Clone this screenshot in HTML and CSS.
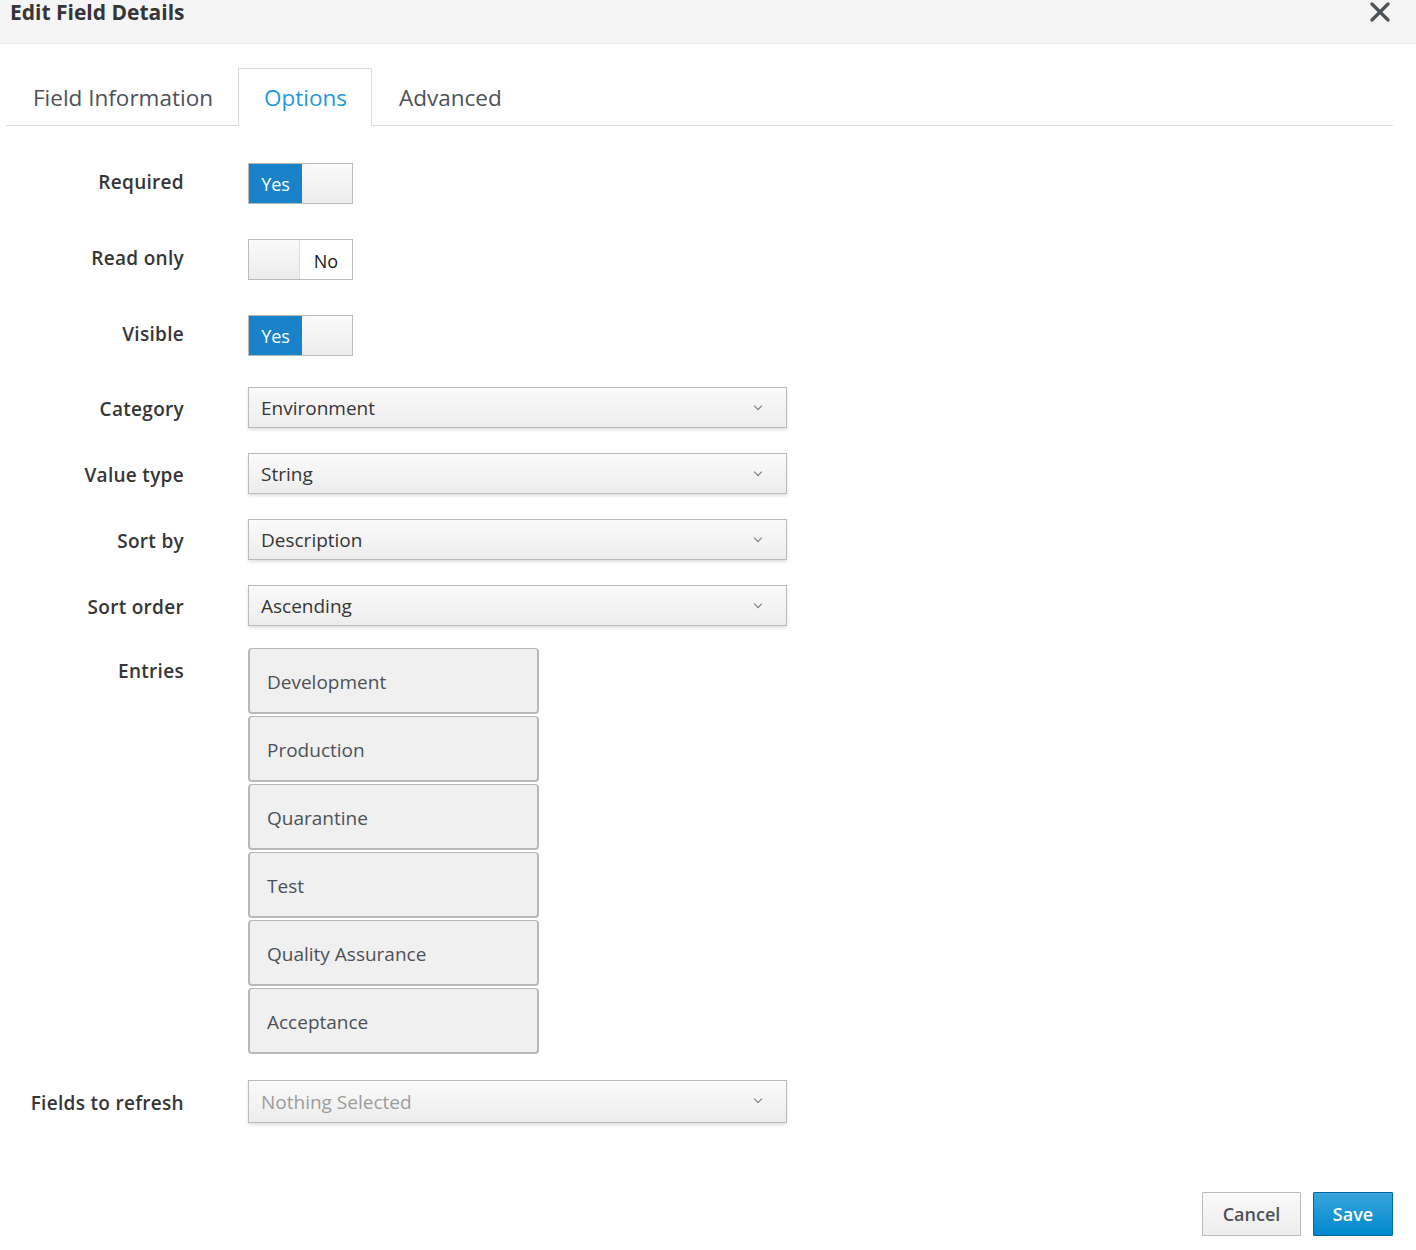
FILE: index.html
```html
<!DOCTYPE html>
<html lang="en">
<head>
    <meta charset="UTF-8">
    <meta name="viewport" content="width=device-width, initial-scale=1.0">
    <title>Edit Field Details</title>
    <link rel="stylesheet" href="styles.css">
</head>
<body>
    <div class="modal-header">
        <h4 class="modal-title">Edit Field Details</h4>
        <button class="close" aria-label="Close">
            <svg width="20" height="20" viewBox="0 0 20 20">
                <path d="M2 2 L18 18 M18 2 L2 18" stroke="#4d5258" stroke-width="3.2" stroke-linecap="round"/>
            </svg>
        </button>
    </div>

    <div class="modal-body">
        <ul class="nav-tabs">
            <li class="tab">Field Information</li>
            <li class="tab active">Options</li>
            <li class="tab">Advanced</li>
        </ul>

        <div class="form">
            <div class="form-group toggle-row">
                <label>Required</label>
                <div class="switch">
                    <span class="switch-on">Yes</span>
                    <span class="switch-handle"></span>
                </div>
            </div>
            <div class="form-group toggle-row">
                <label>Read only</label>
                <div class="switch">
                    <span class="switch-handle"></span>
                    <span class="switch-off">No</span>
                </div>
            </div>
            <div class="form-group toggle-row last-toggle">
                <label>Visible</label>
                <div class="switch">
                    <span class="switch-on">Yes</span>
                    <span class="switch-handle"></span>
                </div>
            </div>

            <div class="form-group select-row">
                <label>Category</label>
                <div class="select">Environment<span class="caret"></span></div>
            </div>
            <div class="form-group select-row">
                <label>Value type</label>
                <div class="select">String<span class="caret"></span></div>
            </div>
            <div class="form-group select-row">
                <label>Sort by</label>
                <div class="select">Description<span class="caret"></span></div>
            </div>
            <div class="form-group select-row entries-before">
                <label>Sort order</label>
                <div class="select">Ascending<span class="caret"></span></div>
            </div>

            <div class="form-group entries-row">
                <label>Entries</label>
                <div class="entries">
                    <div class="entry">Development</div>
                    <div class="entry">Production</div>
                    <div class="entry">Quarantine</div>
                    <div class="entry">Test</div>
                    <div class="entry">Quality Assurance</div>
                    <div class="entry">Acceptance</div>
                </div>
            </div>

            <div class="form-group select-row refresh-row">
                <label>Fields to refresh</label>
                <div class="select placeholder">Nothing Selected<span class="caret"></span></div>
            </div>
        </div>

        <div class="modal-footer">
            <button class="btn btn-default">Cancel</button>
            <button class="btn btn-primary">Save</button>
        </div>
    </div>
</body>
</html>
```

FILE: styles.css
```css
body {
    margin: 0;
    font-family: "Open Sans", "Liberation Sans", sans-serif;
    color: #363636;
    background: #fff;
}
.modal-header {
    display: flex;
    justify-content: space-between;
    align-items: flex-start;
    height: 44px;
    box-sizing: border-box;
    padding: 0 26px 0 10px;
    background-color: #f5f5f5;
    border-bottom: 1px solid #ededed;
}
.modal-title {
    margin: 0;
    margin-top: -2px;
    font-size: 21px;
    line-height: 28px;
    font-weight: 700;
    color: #363636;
}
.close {
    border: none;
    background: none;
    padding: 0;
    margin-top: 2px;
    cursor: pointer;
}
.modal-body {
    padding: 24px 23px 0 6px;
}
.nav-tabs {
    display: flex;
    list-style: none;
    margin: 0;
    padding: 0;
    border-bottom: 1px solid #dcdcdc;
}
.tab {
    height: 56px;
    line-height: 58px;
    padding: 0 24px 0 26px;
    font-size: 22.5px;
    color: #4d5258;
    border: 1px solid transparent;
    border-bottom: none;
    margin-bottom: -1px;
}
.tab.active {
    padding: 0 24px 0 25px;
    color: #1f9ad6;
    background: #fff;
    border-color: #dcdcdc;
    height: 57px;
}
.form {
    padding-top: 37px;
}
.form-group {
    display: grid;
    grid-template-columns: 178px 539px;
    column-gap: 64px;
    align-items: center;
}
.form-group label {
    text-align: right;
    font-size: 19px;
    font-weight: 600;
    letter-spacing: 0.3px;
    color: #363636;
}
.toggle-row label {
    padding-bottom: 3px;
}
.select-row label {
    padding-top: 2px;
}
.toggle-row {
    margin-bottom: 35px;
}
.last-toggle {
    margin-bottom: 31px;
}
.select-row {
    margin-bottom: 25px;
}
.entries-before {
    margin-bottom: 22px;
}
.entries-row {
    align-items: start;
    margin-bottom: 26px;
}
.entries-row label {
    padding-top: 10px;
}

/* on/off switch */
.switch {
    display: flex;
    width: 105px;
    height: 41px;
    box-sizing: border-box;
    border: 1px solid #bbb;
    background: #f5f5f5;
}
.switch-on {
    width: 53px;
    background: #1a82c8;
    color: #fff;
    font-size: 18px;
    line-height: 40px;
    text-align: center;
}
.switch-handle {
    flex: 1;
    background: linear-gradient(#fafafa, #ececec);
}
.switch-off {
    width: 52px;
    background: #fff;
    color: #222;
    font-size: 18px;
    line-height: 42px;
    text-align: center;
    border-left: 1px solid #ddd;
}

/* select box */
.select {
    position: relative;
    height: 41px;
    box-sizing: border-box;
    padding: 0 12px;
    line-height: 41px;
    font-size: 19px;
    color: #363636;
    border: 1px solid #bbb;
    background: linear-gradient(#fafafa, #ededed);
    box-shadow: 0 2px 3px rgba(3, 3, 3, 0.12);
}
.select.placeholder {
    height: 43px;
    line-height: 43px;
    color: #9c9c9c;
}
.caret {
    position: absolute;
    right: 25px;
    top: 15px;
    width: 5px;
    height: 5px;
    border-right: 1.5px solid #72767b;
    border-bottom: 1.5px solid #72767b;
    transform: rotate(45deg);
}

/* entry list */
.entries {
    width: 291px;
    margin-top: 0;
}
.entry {
    height: 66px;
    box-sizing: border-box;
    line-height: 66px;
    padding-left: 17px;
    margin-bottom: 2px;
    font-size: 19px;
    color: #4d5258;
    background: #f0f0f0;
    border: 2px solid #b8b8b8;
    border-top-width: 1px;
    border-radius: 4px;
}
.entry:last-child {
    margin-bottom: 0;
}

.modal-footer {
    display: flex;
    justify-content: flex-end;
    gap: 12px;
    margin-top: 69px;
}
.btn {
    height: 44px;
    box-sizing: border-box;
    font-family: inherit;
    font-size: 18px;
    font-weight: 600;
    border-radius: 1px;
    cursor: pointer;
}
.btn-default {
    width: 99px;
    color: #4d5258;
    background: linear-gradient(#fafafa, #ededed);
    border: 1px solid #bbb;
}
.btn-primary {
    width: 80px;
    color: #fff;
    background: linear-gradient(#39a5dc, #0088ce);
    border: 1px solid #00659c;
}
```
